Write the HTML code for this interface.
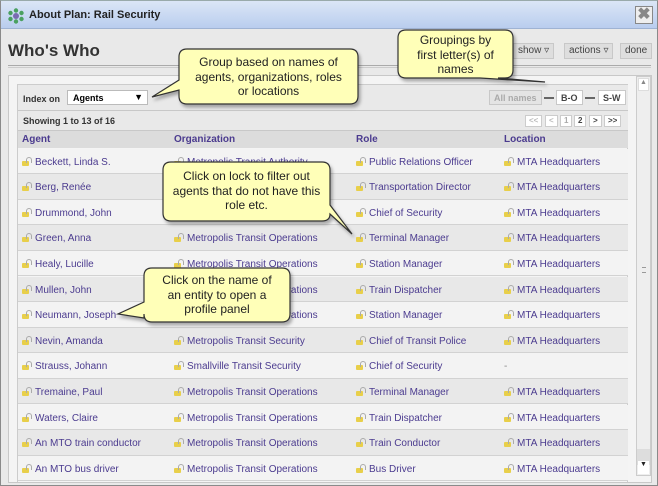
<!DOCTYPE html>
<html><head><meta charset="utf-8"><style>
*{box-sizing:border-box;margin:0;padding:0}
body{width:658px;height:486px;overflow:hidden;background:#e9e9e9;font-family:"Liberation Sans",sans-serif;position:relative;font-size:11px}
.abs{position:absolute}
#win{left:0;top:0;width:658px;height:486px;border:1px solid #8a8a8a;border-top:1px solid #9aa}
#title{left:1px;top:1px;width:656px;height:28px;background:linear-gradient(#dbe6f6,#b9cdee);border-bottom:1px solid #9fb3d3}
#title b{position:absolute;left:28px;top:8px;font-size:11px;color:#222}
#close{left:635px;top:6px;width:18px;height:18px;border:1px solid #888;background:#eee;color:#888;font-size:16px;line-height:16px;text-align:center;font-weight:bold}
h1{position:absolute;left:8px;top:41px;font-size:17px;color:#333;font-weight:bold}
#rule{left:8px;top:65px;width:643px;height:3px;border-top:1px solid #aaa;border-bottom:1px solid #ccc}
.btn{height:16px;border:1px solid #c8c8c8;background:#dedede;color:#444;font-size:10px;line-height:14px;padding:0 4px}
#panel{left:8px;top:75px;width:644px;height:408px;background:#f4f4f4;border:1px solid #c8c8c8}
#inner{left:17px;top:84px;width:611px;height:398px;border:1px solid #ccc;border-bottom:none;background:#f4f4f4}
.bar{left:18px;width:610px;background:#e9e9e9;border-bottom:1px solid #c8c8c8;font-weight:bold;font-size:9px;color:#333}
.sel{left:67px;top:90px;width:81px;height:15px;background:#fff;border:1px solid #bbb;font-size:9px;font-weight:bold;padding:2px 5px}
.pg{height:12px;border:1px solid #ccc;background:#fff;font-size:8px;font-weight:bold;color:#444;line-height:10px;padding:0 3px;top:115px}
.row{position:absolute;left:18px;width:610px;height:25.6px;border-bottom:1px solid #d2d2d2;color:#4b3b8f;font-size:10px}
.row span{position:absolute;top:7px;white-space:nowrap}
.lk{display:inline-block;width:9px;height:9px;position:relative;margin-right:4px;vertical-align:-1px}
.lk:before{content:"";position:absolute;left:0;bottom:0;width:7px;height:5px;background:#e8cf4a;border-radius:1px}
.lk:after{content:"";position:absolute;left:4px;top:0;width:4px;height:5px;border:1px solid #aaa;border-bottom:none;border-radius:3px 3px 0 0}
#sb{left:636px;top:76px;width:15px;height:400px;background:#eee;border:1px solid #ccc}
.call{position:absolute;font-size:12px;color:#222;text-align:center;line-height:14.5px}
</style></head><body>
<div id="win" class="abs"></div>
<div id="title" class="abs"><svg class="abs" style="left:7px;top:7px" width="16" height="16"><circle cx="8" cy="8" r="3" fill="#7a6bb0"/><g fill="#4aa060"><circle cx="8" cy="2.5" r="2.2"/><circle cx="8" cy="13.5" r="2.2"/><circle cx="2.5" cy="5" r="2.2"/><circle cx="13.5" cy="5" r="2.2"/><circle cx="2.5" cy="11" r="2.2"/><circle cx="13.5" cy="11" r="2.2"/></g></svg><b>About Plan: Rail Security</b></div>
<div id="close" class="abs">✖</div>
<h1>Who's Who</h1>
<div class="abs btn" style="left:513px;top:43px">show ▿</div>
<div class="abs btn" style="left:564px;top:43px">actions ▿</div>
<div class="abs btn" style="left:620px;top:43px">done</div>
<div id="rule" class="abs"></div>
<div id="panel" class="abs"></div>
<div id="inner" class="abs"></div>
<div class="abs bar" style="top:85px;height:26px"><span class="abs" style="left:5px;top:9px">Index on</span></div>
<div class="abs sel">Agents<span style="position:absolute;right:4px;top:1px">▼</span></div>
<div class="abs btn" style="left:489px;top:90px;height:15px;font-weight:bold;font-size:9px;color:#aaa;background:#e4e4e4">All names</div>
<div class="abs" style="left:544px;top:97px;width:10px;border-top:2px solid #666"></div>
<div class="abs btn" style="left:556px;top:90px;height:15px;font-weight:bold;font-size:9px;background:#fff">B-O</div>
<div class="abs" style="left:585px;top:97px;width:10px;border-top:2px solid #666"></div>
<div class="abs btn" style="left:598px;top:90px;height:15px;font-weight:bold;font-size:9px;background:#fff">S-W</div>
<div class="abs bar" style="top:111px;height:20px"><span class="abs" style="left:5px;top:5px">Showing 1 to 13 of 16</span></div>
<div class="abs pg" style="left:525px;color:#bbb">&lt;&lt;</div><div class="abs pg" style="left:545px;color:#bbb">&lt;</div><div class="abs pg" style="left:560px;color:#aaa">1</div><div class="abs pg" style="left:574px">2</div><div class="abs pg" style="left:589px">&gt;</div><div class="abs pg" style="left:604px">&gt;&gt;</div>
<div class="abs bar" style="top:131px;height:17px;background:#dcdcdc;border:none;color:#4b3b8f;font-size:10px">
<span class="abs" style="left:4px;top:3px">Agent</span><span class="abs" style="left:156px;top:3px">Organization</span><span class="abs" style="left:338px;top:3px">Role</span><span class="abs" style="left:486px;top:3px">Location</span></div>
<div id="rows"></div>
<div id="sb" class="abs"><div class="abs" style="left:1px;top:1px;width:11px;height:13px;background:#fff;border:1px solid #ddd;font-size:7px;text-align:center;color:#888">▲</div><div class="abs" style="left:0;top:372px;width:13px;height:16px;background:#ddd"></div><div class="abs" style="left:5px;top:190px;width:4px;height:6px;border-top:1px solid #999;border-bottom:1px solid #999"></div><div class="abs" style="left:1px;top:384px;width:11px;height:13px;background:#fff;font-size:7px;text-align:center;color:#222">▼</div></div>
<script>
var d=[["Beckett, Linda S.","Metropolis Transit Authority","Public Relations Officer","MTA Headquarters"],["Berg, Renée","Metropolis Transit Authority","Transportation Director","MTA Headquarters"],["Drummond, John","Metropolis Transit Authority","Chief of Security","MTA Headquarters"],["Green, Anna","Metropolis Transit Operations","Terminal Manager","MTA Headquarters"],["Healy, Lucille","Metropolis Transit Operations","Station Manager","MTA Headquarters"],["Mullen, John","Metropolis Transit Operations","Train Dispatcher","MTA Headquarters"],["Neumann, Joseph","Metropolis Transit Operations","Station Manager","MTA Headquarters"],["Nevin, Amanda","Metropolis Transit Security","Chief of Transit Police","MTA Headquarters"],["Strauss, Johann","Smallville Transit Security","Chief of Security","-"],["Tremaine, Paul","Metropolis Transit Operations","Terminal Manager","MTA Headquarters"],["Waters, Claire","Metropolis Transit Operations","Train Dispatcher","MTA Headquarters"],["An MTO train conductor","Metropolis Transit Operations","Train Conductor","MTA Headquarters"],["An MTO bus driver","Metropolis Transit Operations","Bus Driver","MTA Headquarters"]];
var x=[4,156,338,486],h="";
d.forEach(function(r,i){h+='<div class="row" style="top:'+(148.5+i*25.6)+'px;background:'+(i%2?'#e8e8e8':'#f3f3f3')+'">';r.forEach(function(c,j){h+='<span style="left:'+x[j]+'px;top:8px;'+(c=="-"?'color:#888;':'')+'">'+(c=="-"?'':'<i class="lk"></i>')+c+'</span>'});h+='</div>'});
document.getElementById('rows').innerHTML=h;
</script>
<svg class="abs" style="left:0;top:0" width="658" height="486">
<defs><filter id="s"><feDropShadow dx="2" dy="3" stdDeviation="1.5" flood-color="#000" flood-opacity="0.3"/></filter></defs>
<g fill="#ffffb8" stroke="#333" stroke-width="1.2" filter="url(#s)">
<path d="M187 49 H350 Q358 49 358 57 V96 Q358 104 350 104 H187 Q179 104 179 96 V90 L152 97 L179 80 V57 Q179 49 187 49 Z"/>
<path d="M406 30 H505 Q513 30 513 38 V70 Q513 78 505 78 H498 L545 82 L480 78 H406 Q398 78 398 70 V38 Q398 30 406 30 Z"/>
<path d="M171 162 H322 Q330 162 330 170 V205 L352 234 L330 214 Q330 221 322 221 H171 Q163 221 163 213 V170 Q163 162 171 162 Z"/>
<path d="M152 268 H282 Q290 268 290 276 V314 Q290 322 282 322 H152 Q144 322 144 314 V318 L118 314 L144 302 V276 Q144 268 152 268 Z"/>
</g></svg>
<div class="call" style="left:179px;top:55px;width:179px">Group based on names of<br>agents, organizations, roles<br>or locations</div>
<div class="call" style="left:398px;top:33px;width:115px">Groupings by<br>first letter(s) of<br>names</div>
<div class="call" style="left:163px;top:169px;width:167px">Click on lock to filter out<br>agents that do not have this<br>role etc.</div>
<div class="call" style="left:144px;top:273px;width:146px">Click on the name of<br>an entity to open a<br>profile panel</div>
</body></html>
